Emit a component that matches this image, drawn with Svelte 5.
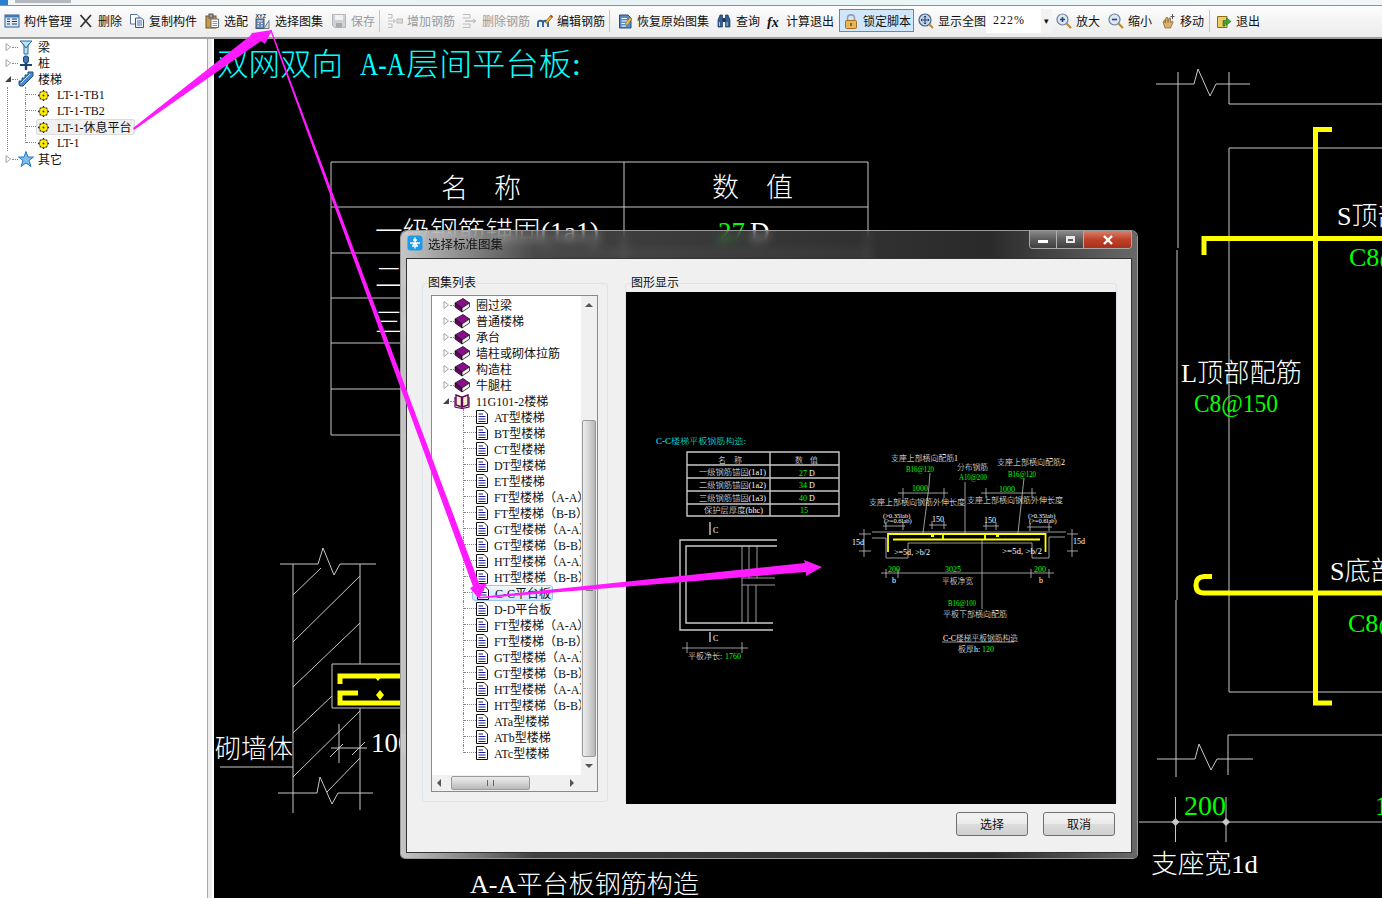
<script>
	const toolbar = [
		{ id: 'mgmt', label: '构件管理', w: 74 },
		{ id: 'cross', label: '删除', w: 51 },
		{ id: 'copy', label: '复制构件', w: 75 },
		{ id: 'clip', label: '选配', w: 51 },
		{ id: 'atlas', label: '选择图集', w: 76 },
		{ id: 'save', label: '保存', w: 48, off: true },
		{ sep: true, w: 8 },
		{ id: 'addbar', label: '增加钢筋', w: 75, off: true },
		{ id: 'delbar', label: '删除钢筋', w: 75, off: true },
		{ id: 'edit', label: '编辑钢筋', w: 72 },
		{ sep: true, w: 8 },
		{ id: 'restore', label: '恢复原始图集', w: 99 },
		{ id: 'find', label: '查询', w: 50 },
		{ id: 'fx', label: '计算退出', w: 77 },
		{ id: 'lock', label: '锁定脚本', w: 75, on: true },
		{ id: 'fit', label: '显示全图', w: 72 },
		{ combo: true, w: 66 },
		{ id: 'zoomin', label: '放大', w: 52 },
		{ id: 'zoomout', label: '缩小', w: 52 },
		{ id: 'hand', label: '移动', w: 50 },
		{ sep: true, w: 6 },
		{ id: 'exit', label: '退出', w: 50 }
	];

	const atlasTop = ['圈过梁', '普通楼梯', '承台', '墙柱或砌体拉筋', '构造柱', '牛腿柱'];
	const atlasKids = [
		'AT型楼梯', 'BT型楼梯', 'CT型楼梯', 'DT型楼梯', 'ET型楼梯',
		'FT型楼梯（A-A）', 'FT型楼梯（B-B）', 'GT型楼梯（A-A）', 'GT型楼梯（B-B）',
		'HT型楼梯（A-A）', 'HT型楼梯（B-B）', 'C-C平台板', 'D-D平台板',
		'FT型楼梯（A-A）', 'FT型楼梯（B-B）', 'GT型楼梯（A-A）', 'GT型楼梯（B-B）',
		'HT型楼梯（A-A）', 'HT型楼梯（B-B）', 'ATa型楼梯', 'ATb型楼梯', 'ATc型楼梯'
	];
	const stairKids = ['LT-1-TB1', 'LT-1-TB2', 'LT-1-休息平台', 'LT-1'];

	const W = '#ffffff';
	const G = '#00ff00';
	const C = '#00ffff';

	// main drawing, page coordinates
	const lines = [
		'M331 162H868V435H331Z', 'M331 207H868', 'M624 162V435', 'M331 253H868', 'M331 298H868', 'M331 343H868', 'M331 389H868',
		'M1156 84H1194L1198 69L1210 96L1216 84H1250', 'M1178 72V248', 'M1177 250V600', 'M1229 72V104H1382', 'M1229 148V692H1382', 'M1229 148H1382',
		'M1157 759H1195L1199 744L1211 770L1217 759H1253', 'M1176 600V777', 'M1228 775V735H1382',
		'M1139 822H1382', 'M1175.5 797V842', 'M1226 797V842',
		'M280 564H318L323 548L334 575L340 564H376', 'M293 564V813', 'M360 564V664', 'M360 708V810',
		'M278 793H317L320 777L332 804L338 793H373', 'M332 664H401', 'M332 664V708H401',
		'M293 595L321 568', 'M293 642L360 576', 'M293 687L360 623', 'M293 733L332 696', 'M293 777L360 711', 'M327 792L360 758',
		'M220 767H293', 'M339 724V763', 'M331 748H367', 'M330 757L343 744', 'M352 755L365 742'
	];
	const texts = [
		{ x: 217, y: 75, s: 31, c: C, t: '双网双向', len: 126 },
		{ x: 360, y: 75, s: 31, c: C, t: 'A-A', len: 45 },
		{ x: 406, y: 75, s: 31, c: C, t: '层间平台板:', len: 175 },
		{ x: 441, y: 198, s: 27, c: W, t: '名' },
		{ x: 494, y: 198, s: 27, c: W, t: '称' },
		{ x: 712, y: 197, s: 27, c: W, t: '数' },
		{ x: 766, y: 197, s: 27, c: W, t: '值' },
		{ x: 375, y: 241, s: 27, c: W, t: '一级钢筋锚固(1a1)', len: 224 },
		{ x: 718, y: 241, s: 27, c: G, t: '27' },
		{ x: 750, y: 241, s: 27, c: W, t: 'D' },
		{ x: 375, y: 287, s: 27, c: W, t: '二级钢筋锚固(1a2)', len: 224 },
		{ x: 375, y: 332, s: 27, c: W, t: '三级钢筋锚固(1a3)', len: 224 },
		{ x: 1337, y: 225, s: 26, c: W, t: 'S顶部配筋' },
		{ x: 1349, y: 266, s: 26, c: G, t: 'C8@150' },
		{ x: 1181, y: 382, s: 26, c: W, t: 'L顶部配筋', len: 121 },
		{ x: 1194, y: 412, s: 26, c: G, t: 'C8@150', len: 84 },
		{ x: 1330, y: 580, s: 26, c: W, t: 'S底部配筋' },
		{ x: 1348, y: 632, s: 26, c: G, t: 'C8@150' },
		{ x: 1184, y: 815, s: 27, c: G, t: '200', len: 42 },
		{ x: 1375, y: 815, s: 27, c: G, t: '100' },
		{ x: 1151, y: 873, s: 26, c: W, t: '支座宽1d', len: 107 },
		{ x: 470, y: 893, s: 25, c: W, t: 'A-A平台板钢筋构造', len: 229 },
		{ x: 215, y: 758, s: 26, c: W, t: '砌墙体', len: 78 },
		{ x: 371, y: 752, s: 27, c: W, t: '100' }
	];

	// small drawing inside the dialog, page coordinates too
	const previewLines = [
		'M687 451H839V515H687Z', 'M687 464H839', 'M687 477H839', 'M687 490H839', 'M687 503H839', 'M770 451V515',
		'M777 539H680V629H773', 'M777 545H686V622H773', 'M710 521V534', 'M710 631V641'
	];
	const previewThin = [
		'M742 545V622', 'M749 545V577', 'M757 545V577', 'M748 584V622', 'M756 584V622', 'M742 577H775', 'M742 584H775',
		'M682 647H748', 'M687 641V652', 'M742 641V652',
		'M930 472L929 485L923 532', 'M965 481V532', 'M1024 477L1018 532',
		'M898 492H948', 'M903 487V497', 'M944 487V497', 'M981 492H1036', 'M986 487V497', 'M1032 487V497',
		'M883 525H905', 'M886 521V529', 'M903 521V529', 'M929 524H947', 'M932 520V528', 'M944 520V528',
		'M983 525H999', 'M986 521V529', 'M996 521V529', 'M1027 526H1052', 'M1030 522V530', 'M1049 522V530',
		'M872 531H1066', 'M872 537H886V557H908V542H1032V557H1049V536H1065',
		'M864 528V556', 'M859 533H871', 'M859 550H871', 'M1072 528V556', 'M1067 533H1078', 'M1067 550H1078',
		'M881 572H1054', 'M886 568V577', 'M898 568V577', 'M1031 568V577', 'M1049 568V577',
		'M982 538V608', 'M942 641H1014'
	];
	const previewTexts = [
		{ x: 656, y: 443, c: C, t: 'C-C楼梯平板钢筋构造:', len: 90 },
		{ x: 718, y: 462, c: W, t: '名' },
		{ x: 734, y: 462, c: W, t: '称' },
		{ x: 795, y: 462, c: W, t: '数' },
		{ x: 810, y: 462, c: W, t: '值' },
		{ x: 699, y: 474, c: W, t: '一级钢筋锚固(1a1)', len: 67 },
		{ x: 699, y: 487, c: W, t: '二级钢筋锚固(1a2)', len: 67 },
		{ x: 699, y: 500, c: W, t: '三级钢筋锚固(1a3)', len: 67 },
		{ x: 704, y: 512, c: W, t: '保护层厚度(bhc)', len: 59 },
		{ x: 799, y: 475, c: G, t: '27' }, { x: 809, y: 475, c: W, t: 'D' },
		{ x: 799, y: 487, c: G, t: '34' }, { x: 809, y: 487, c: W, t: 'D' },
		{ x: 799, y: 500, c: G, t: '40' }, { x: 809, y: 500, c: W, t: 'D' },
		{ x: 800, y: 512, c: G, t: '15' },
		{ x: 713, y: 532, c: W, t: 'C' }, { x: 713, y: 640, c: W, t: 'C' },
		{ x: 688, y: 658, c: W, t: '平板净长:' }, { x: 725, y: 658, c: G, t: '1760' },
		{ x: 891, y: 460, c: W, t: '支座上部横向配筋1', len: 67 },
		{ x: 906, y: 471, c: G, t: 'B16@120', len: 28 },
		{ x: 957, y: 469, c: W, t: '分布钢筋', len: 31 },
		{ x: 959, y: 479, c: G, t: 'A10@200', len: 28 },
		{ x: 997, y: 464, c: W, t: '支座上部横向配筋2', len: 68 },
		{ x: 1008, y: 476, c: G, t: 'B16@120', len: 28 },
		{ x: 912, y: 490, c: G, t: '1000' }, { x: 999, y: 491, c: G, t: '1000' },
		{ x: 869, y: 504, c: W, t: '支座上部横向钢筋外伸长度', len: 96 },
		{ x: 967, y: 502, c: W, t: '支座上部横向钢筋外伸长度', len: 96 },
		{ x: 883, y: 517, c: W, t: '(>0.35lab)', s: 6.5 }, { x: 884, y: 522, c: W, t: '(>=0.6lab)', s: 6.5 },
		{ x: 1028, y: 517, c: W, t: '(>0.35lab)', s: 6.5 }, { x: 1029, y: 522, c: W, t: '(>=0.6lab)', s: 6.5 },
		{ x: 932, y: 521, c: W, t: '150' }, { x: 984, y: 522, c: W, t: '150' },
		{ x: 852, y: 544, c: W, t: '15d' }, { x: 1073, y: 543, c: W, t: '15d' },
		{ x: 894, y: 554, c: W, t: '>=5d, >b/2', len: 36 }, { x: 1002, y: 553, c: W, t: '>=5d, >b/2', len: 40 },
		{ x: 888, y: 571, c: G, t: '200' }, { x: 945, y: 571, c: G, t: '3025' }, { x: 1034, y: 571, c: G, t: '200' },
		{ x: 892, y: 582, c: W, t: 'b' }, { x: 1039, y: 582, c: W, t: 'b' },
		{ x: 942, y: 583, c: W, t: '平板净宽', len: 31 },
		{ x: 948, y: 605, c: G, t: 'B16@100', len: 28 },
		{ x: 943, y: 616, c: W, t: '平板下部横向配筋', len: 64 },
		{ x: 943, y: 640, c: W, t: 'C-C楼梯平板钢筋构造', len: 75 },
		{ x: 958, y: 651, c: W, t: '板厚h:' }, { x: 982, y: 651, c: G, t: '120' }
	];
</script>

{#snippet icon(id)}
	<svg class="ico" viewBox="0 0 16 16">
		{#if id === 'mgmt'}
			<rect x="1" y="2" width="14" height="12" fill="#dfeaf6" stroke="#2d5f96" />
			<rect x="1" y="2" width="14" height="2.5" fill="#3f78b5" />
			<path d="M8 6H13M8 8.5H13M8 11H13M3 6H6M3 8.5H6M3 11H6" stroke="#1f3f66" />
		{:else if id === 'cross'}
			<path d="M2.5 2L13 14M13 2L2.5 14" stroke="#333" stroke-width="1.8" />
		{:else if id === 'copy'}
			<path d="M1.5 1.5H8L10 3.5V11H1.5Z" fill="#fff" stroke="#56729a" />
			<path d="M6.5 5H12.5L14.5 7V14.5H6.5Z" fill="#eef3fb" stroke="#34568a" />
			<path d="M8 8H13M8 10H13M8 12H13" stroke="#4b74ad" />
		{:else if id === 'clip'}
			<rect x="2" y="3" width="10" height="12" fill="#c79b4e" stroke="#6e5220" />
			<rect x="5" y="1" width="4" height="4" fill="#9aa2ad" stroke="#555" />
			<path d="M7 6H14.5V14.5H7Z" fill="#fff" stroke="#5d6d86" />
			<path d="M8.5 8.5H13M8.5 10.5H13M8.5 12.5H13" stroke="#7c93b5" />
		{:else if id === 'atlas'}
			<text x="0.5" y="4.5" font-size="5.4" font-family="Liberation Sans" font-weight="700" fill="#333">XYZ</text>
			<rect x="1" y="6" width="8" height="9.5" fill="#6d89ad" stroke="#3d5370" />
			<path d="M2.5 8H7.5M2.5 10.5H4M6 10.5H7.5M2.5 13H4M6 13H7.5" stroke="#fff" />
			<path d="M9 15.5L14 7.5V15.5Z" fill="#d8dee6" stroke="#71808f" />
		{:else if id === 'save'}
			<path d="M1.5 1.5H14.5V14.5H3.5L1.5 12.5Z" fill="#cfd2d4" stroke="#b4b6b8" />
			<rect x="4" y="2" width="8" height="5" fill="#f2f2f2" />
			<rect x="5" y="10" width="6" height="4.5" fill="#a9acae" />
		{:else if id === 'addbar'}
			<path d="M1 1.5H5V5H1M1 11H5V14.5H1" fill="none" stroke="#bcbcbc" />
			<path d="M1 8H8" stroke="#bcbcbc" />
			<path d="M6 6L8.5 8L6 10" fill="none" stroke="#bcbcbc" />
			<rect x="10" y="6" width="5.5" height="4" fill="#dcdcdc" stroke="#bcbcbc" />
		{:else if id === 'delbar'}
			<path d="M1 1.5H8V5H1M1 11H8V14.5H1" fill="none" stroke="#bcbcbc" />
			<path d="M3 8H13" stroke="#bcbcbc" stroke-width="1.5" />
			<path d="M11 6L14 8L11 10" fill="none" stroke="#bcbcbc" />
		{:else if id === 'edit'}
			<path d="M1 14V10C1 7 6 7 6 10V14M6 14V10C6 7 11 7 11 10V14" fill="none" stroke="#2c5e99" stroke-width="1.8" />
			<path d="M8 9L13.5 2.5L15.5 4L10 10.5Z" fill="#e3b23f" stroke="#7b5414" stroke-width=".6" />
			<path d="M13.5 2.5L15.5 4" stroke="#c4372a" stroke-width="1.6" />
		{:else if id === 'restore'}
			<path d="M2.5 2H11L14 5V15H2.5Z" fill="#5a8cc4" stroke="#234d80" />
			<path d="M4.5 5.5H10M4.5 8H12M4.5 10.5H12M4.5 13H9" stroke="#fff" />
			<path d="M8 11L13 4.5L15 6L10 12.5Z" fill="#e7c049" stroke="#7b5414" stroke-width=".5" />
		{:else if id === 'find'}
			<path d="M2 14V7L4 2H6.5V14ZM9.5 14V2H12L14 7V14Z" fill="#325e93" stroke="#18365c" stroke-width=".7" />
			<rect x="6.5" y="5" width="3" height="4" fill="#18365c" />
			<path d="M3.5 9V13M11 9V13" stroke="#a9c6e6" />
		{:else if id === 'fx'}
			<text x="1" y="13.5" font-size="14" font-style="italic" font-weight="700" font-family="Liberation Serif" fill="#111">fx</text>
		{:else if id === 'lock'}
			<path d="M4.5 8V5C4.5 .8 11.5 .8 11.5 5V8" fill="none" stroke="#9c9ea3" stroke-width="1.6" />
			<rect x="2.5" y="7.5" width="11" height="8" rx="1" fill="#e6b65a" stroke="#a2701f" />
			<path d="M8 10V13" stroke="#6d4a12" stroke-width="1.5" />
		{:else if id === 'fit'}
			<circle cx="7" cy="7" r="6" fill="#c4d5ea" stroke="#48648c" stroke-width="1.2" />
			<path d="M7 3V11M3 7H11M5.8 4.2L7 3L8.2 4.2M5.8 9.8L7 11L8.2 9.8M4.2 5.8L3 7L4.2 8.2M9.8 5.8L11 7L9.8 8.2" fill="none" stroke="#243e6a" />
			<path d="M11 11L15 15" stroke="#c08a2e" stroke-width="2" />
		{:else if id === 'zoomin' || id === 'zoomout'}
			<circle cx="6.5" cy="6.5" r="5.5" fill="#dbe6f3" stroke="#6a7f9d" stroke-width="1.2" />
			<path d={id === 'zoomin' ? 'M4 6.5H9M6.5 4V9' : 'M4 6.5H9'} stroke="#24467a" stroke-width="1.6" />
			<path d="M10.5 10.5L15 15" stroke="#c08a2e" stroke-width="2.2" />
		{:else if id === 'hand'}
			<path d="M3 9L5 6.5V10L6 4.5H7.5L8 9.5L9 5H10.5L10.5 9.5L12.5 8L13 9.5L10.5 15H5Z" fill="#d9b26a" stroke="#80602a" stroke-width=".7" />
			<path d="M12.5 1V6M10.5 3.5H14.5" stroke="#555" />
		{:else if id === 'exit'}
			<path d="M1.5 3.5H11V14.5H1.5Z" fill="#f0cd63" stroke="#8c6c1a" />
			<path d="M7 13V7.5H10.5V5L15 8.5L10.5 12V10H9V13Z" fill="#43a538" stroke="#1f6a1a" stroke-width=".6" />
		{/if}
	</svg>
{/snippet}

{#snippet arrow(open)}
	{#if open}
		<svg class="arrow" viewBox="0 0 8 10"><path d="M7 2V8H1Z" fill="#444" /></svg>
	{:else}
		<svg class="arrow" viewBox="0 0 8 10"><path d="M2 1.5L6.5 5L2 8.5Z" fill="#fff" stroke="#a5a5a5" /></svg>
	{/if}
{/snippet}

{#snippet gear()}
	<svg class="gear" viewBox="0 0 12 12">
		<path d="M6 0V12M0 6H12M2 2L10 10M10 2L2 10" stroke="#222" stroke-width="1.5" />
		<circle cx="6" cy="6" r="4.4" fill="#ffee00" stroke="#333" stroke-width=".7" />
		<circle cx="6" cy="6" r="1.1" fill="#333" />
	</svg>
{/snippet}

{#snippet book()}
	<svg class="book" viewBox="0 0 16 16">
		<path d="M1 6L9 1.5L15.5 6L8 11Z" fill="#8a0f8a" stroke="#111" stroke-width=".8" />
		<path d="M1 6L8 11V15L1 10Z" fill="#5f085f" stroke="#111" stroke-width=".8" />
		<path d="M8 11L15.5 6V10L8 15Z" fill="#f4f0f4" stroke="#111" stroke-width=".8" />
	</svg>
{/snippet}

{#snippet doc()}
	<svg class="doc" viewBox="0 0 12 14">
		<path d="M.5 .5H8L11.5 4V13.5H.5Z" fill="#fff" stroke="#111" />
		<path d="M2.5 4H7M2.5 6.5H9.5M2.5 9H9.5M2.5 11.5H9.5" stroke="#1a1a9c" />
	</svg>
{/snippet}

{#snippet elbow(last)}
	<span class="elbow" class:last><i></i></span>
{/snippet}

<div class="page">
	<div class="titlebar"><span class="app-ico"></span><span class="app-name"></span></div>

	<div class="toolbar">
		{#each toolbar as t}
			{#if t.sep}
				<span class="sep" style:width="{t.w}px"></span>
			{:else if t.combo}
				<span class="combo" style:width="{t.w}px">222%<b>▾</b></span>
			{:else}
				<span class="tool" class:off={t.off} class:on={t.on} style:width="{t.w}px">
					{@render icon(t.id)}{t.label}
				</span>
			{/if}
		{/each}
	</div>

	<div class="work">
		<aside class="side">
			<div class="srow">{@render arrow(false)}<span class="dash"></span>
				<svg class="tico" viewBox="0 0 16 16"><path d="M2 2H14L10 6V15H6V6Z" fill="#bfe0f2" stroke="#1d6ea8" /><path d="M4 4L8 9M12 4L8 9" stroke="#1d6ea8" /></svg>
				<span>梁</span></div>
			<div class="srow">{@render arrow(false)}<span class="dash"></span>
				<svg class="tico" viewBox="0 0 16 16"><rect x="5.5" y="1" width="5" height="7" rx="2" fill="#3979b5" stroke="#1c466f" /><path d="M2 10H14" stroke="#1c466f" stroke-width="2" /><path d="M8 8V15" stroke="#1c466f" stroke-width="2.4" /></svg>
				<span>桩</span></div>
			<div class="srow">{@render arrow(true)}<span class="dash"></span>
				<svg class="tico" viewBox="0 0 16 16"><path d="M1 14V10H4V7H7V4H10V1H15V5L5 15H2Z" fill="#4f88c6" stroke="#1f4c80" /><path d="M3 12L12 3" stroke="#d6e7f7" /></svg>
				<span>楼梯</span></div>
			<div class="skids">
				{#each stairKids as k, i}
					<div class="srow kid">
						{@render elbow(i === stairKids.length - 1)}
						<span class="pick" class:sel={i === 2}>{@render gear()}<span>{k}</span></span>
					</div>
				{/each}
			</div>
			<div class="srow">{@render arrow(false)}<span class="dash"></span>
				<svg class="tico" viewBox="0 0 16 16"><path d="M8 .5L10 6H15.5L11 9.5L13 15.5L8 12L3 15.5L5 9.5L.5 6H6Z" fill="#7dbcec" stroke="#1f78be" /></svg>
				<span>其它</span></div>
		</aside>

		<main class="canvas">
			<svg class="draw" viewBox="214 39 1168 859">
				{#each lines as d}
					<path {d} fill="none" stroke="#c8c8c8" />
				{/each}
				<path d="M1332 129.5H1315.5V703H1332M1204 255V238.5H1382M1212 576.5H1204Q1196 577 1196 585Q1196 593 1204 593H1382" fill="none" stroke="#ffff00" stroke-width="5" />
				<path d="M340 684V676H401M358 693H340V703H401" fill="none" stroke="#ffff00" stroke-width="5" />
				<path d="M374 676H382L378 681ZM380 690L384 695L380 700L376 695Z" fill="#ffff00" />
				<path d="M1175.5 818L1179.5 822L1175.5 826L1171.5 822ZM1226 818L1230 822L1226 826L1222 822Z" fill="#c8c8c8" />
				{#each texts as t}
					<text class="cad" x={t.x} y={t.y} font-size={t.s} fill={t.c} textLength={t.len} lengthAdjust={t.len ? 'spacingAndGlyphs' : undefined}>{t.t}</text>
				{/each}
			</svg>
		</main>
	</div>

	<section class="dialog">
		<header class="dlg-title">
			<svg class="dlg-ico" viewBox="0 0 16 16">
				<rect x=".5" y=".5" width="15" height="15" rx="3" fill="#1e9be8" />
				<path d="M8 2.5V13.5M3 8H13M6 5H10M5 11H6.5V8M11 11H9.5V8" fill="none" stroke="#fff" stroke-width="1.4" />
			</svg>
			<span class="dlg-name">选择标准图集</span>
			<div class="caption">
				<span class="cap-btn"><i class="min"></i></span>
				<span class="cap-btn"><i class="max"></i></span>
				<span class="cap-btn close">
					<svg viewBox="0 0 12 10"><path d="M2 1L10 9M10 1L2 9" stroke="#fff" stroke-width="2.4" /></svg>
				</span>
			</div>
		</header>

		<div class="client">
			<div class="groups">
				<fieldset class="g-list">
					<legend>图集列表</legend>
					<div class="listbox">
						<div class="tree">
							{#each atlasTop as a}
								<div class="trow">{@render arrow(false)}<span class="dash short"></span>{@render book()}<span class="tname">{a}</span></div>
							{/each}
							<div class="trow">{@render arrow(true)}<span class="dash short"></span>
								<svg class="book" viewBox="0 0 16 16">
									<path d="M2 2L7.5 4V14L2 12Z" fill="#f7efc4" stroke="#5f085f" stroke-width="1.4" />
									<path d="M14 2L8.5 4V14L14 12Z" fill="#f7efc4" stroke="#5f085f" stroke-width="1.4" />
									<path d="M1 4V14L8 15.5L15 14V4" fill="none" stroke="#5f085f" stroke-width="1.2" />
								</svg>
								<span class="tname">11G101-2楼梯</span></div>
							<div class="tkids">
								{#each atlasKids as k, i}
									<div class="trow kid">
										{@render elbow(i === atlasKids.length - 1)}
										<span class="leaf" class:cur={i === 11}>{@render doc()}<span>{k}</span></span>
									</div>
								{/each}
							</div>
						</div>
						<div class="vbar">
							<span class="tri up"></span>
							<span class="vthumb"><i></i></span>
							<span class="tri down"></span>
						</div>
						<div class="hbar">
							<span class="tri left"></span>
							<span class="hthumb"><i></i></span>
							<span class="tri right"></span>
						</div>
					</div>
				</fieldset>
				<fieldset class="g-view">
					<legend>图形显示</legend>
					<svg class="preview" viewBox="626 291 490 512">
						{#each previewLines as d}
							<path {d} fill="none" stroke="#c8c8c8" stroke-width="1.4" />
						{/each}
						{#each previewThin as d}
							<path {d} fill="none" stroke="#c0c0c0" stroke-width=".8" />
						{/each}
						<path d="M888 551V533H1045.5V551M893 538.5H1040M943 533V538M985 533V538" fill="none" stroke="#ffff00" stroke-width="1.8" />
						<path d="M931 534H934V536H931ZM996 534H999V536H996Z" fill="#ffff00" />
						{#each previewTexts as t}
							<text class="cad" x={t.x} y={t.y} font-size={t.s ?? 8} fill={t.c} textLength={t.len} lengthAdjust={t.len ? 'spacingAndGlyphs' : undefined}>{t.t}</text>
						{/each}
					</svg>
				</fieldset>
			</div>
			<div class="actions">
				<button>选择</button>
				<button>取消</button>
			</div>
		</div>
	</section>

	<svg class="marks" viewBox="0 0 1382 898">
		<polygon points="133,128 250,36 252,33 272,30 265,44 261,41 134,130" />
		<polygon points="270,30 271.5,30 479.5,584.5 487,583 479,599 470,588 473,586.5" />
		<polygon points="480,597 805,563 804,560 822,567 806,576 806,572 480,598.5" />
	</svg>
</div>

<style>
	:global(body) {
		background: #fff;
	}
	.page {
		position: relative;
		width: 1382px;
		height: 898px;
		overflow: hidden;
		font-family: 'Liberation Serif', 'Noto Sans CJK SC', sans-serif;
		font-size: 12px;
		color: #111;
	}
	.titlebar {
		display: flex;
		gap: 7px;
		height: 6px;
		overflow: hidden;
		background: linear-gradient(90deg, #f4f6f7, #e9f2f4 40%, #eaf6f7 70%, #f1f6f8);
		border-bottom: 1px solid #8b9197;
		box-sizing: border-box;
	}
	.app-ico {
		width: 8px;
		height: 5px;
		background: #2a7fd0;
	}
	.app-name {
		width: 56px;
		height: 3px;
		background: #8a8f96;
		opacity: 0.6;
	}
	.toolbar {
		display: flex;
		align-items: center;
		height: 33px;
		padding-bottom: 2px;
		box-sizing: border-box;
		background: linear-gradient(#fdfdfd, #f2f2f2 60%, #ececec);
		border-bottom: 2px solid #9d9d9d;
	}
	.tool {
		display: flex;
		flex: none;
		align-items: center;
		gap: 4px;
		height: 23px;
		padding-left: 4px;
		box-sizing: border-box;
		white-space: nowrap;
	}
	.tool.off {
		color: #9a9a9a;
	}
	.tool.on {
		background: #cfe6fb;
		outline: 1px solid #3b93e6;
		outline-offset: -1px;
	}
	.ico {
		flex: none;
		width: 16px;
		height: 16px;
	}
	.sep {
		flex: none;
		height: 22px;
		background: linear-gradient(#c4c4c4, #c4c4c4) no-repeat center / 1px 100%;
	}
	.combo {
		display: flex;
		flex: none;
		align-items: center;
		justify-content: space-between;
		height: 24px;
		padding-left: 7px;
		box-sizing: border-box;
		letter-spacing: 1px;
		background: #fff;
	}
	.combo b {
		width: 11px;
		height: 100%;
		font-size: 9px;
		font-weight: 400;
		line-height: 24px;
		text-align: center;
		background: #f3f3f3;
	}
	.work {
		display: flex;
		height: 859px;
	}
	.side {
		flex: none;
		width: 207px;
		background: #fff;
		border-right: 1px solid #a7a7a7;
	}
	.canvas {
		flex: 1;
		background: #000;
		border-left: 2px solid #fff;
		box-shadow: -4px 0 0 #ededed;
		margin-left: 4px;
	}
	.draw {
		display: block;
		width: 1168px;
		height: 859px;
	}
	.cad {
		font-family: 'Liberation Serif', 'Noto Sans CJK SC', serif;
		font-weight: 300;
	}
	.srow {
		display: flex;
		align-items: center;
		height: 16px;
		padding-left: 4px;
	}
	.arrow {
		flex: none;
		width: 8px;
		height: 10px;
	}
	.dash {
		flex: none;
		width: 6px;
		border-top: 1px dotted #888;
	}
	.dash.short {
		width: 4px;
	}
	.tico {
		flex: none;
		width: 16px;
		height: 16px;
		margin-right: 4px;
	}
	.skids {
		margin-left: 7px;
		border-left: 1px dotted #888;
	}
	.srow.kid {
		align-items: flex-start;
		padding-left: 17px;
	}
	.elbow {
		flex: none;
		width: 11px;
		height: 16px;
		box-sizing: border-box;
		border-left: 1px dotted #888;
	}
	.elbow i {
		display: block;
		height: 8px;
		box-sizing: border-box;
		border-bottom: 1px dotted #888;
	}
	.elbow.last {
		height: 8px;
	}
	.pick {
		display: flex;
		align-items: center;
		gap: 8px;
		height: 16px;
		padding: 0 4px 0 2px;
		border-radius: 3px;
	}
	.pick.sel {
		background: #f0f0f0;
		box-shadow: inset 0 0 0 1px #dcdcdc;
	}
	.gear {
		flex: none;
		width: 11px;
		height: 11px;
	}

	.dialog {
		position: absolute;
		left: 401px;
		top: 231px;
		display: flex;
		flex-direction: column;
		width: 736px;
		height: 627px;
		box-sizing: border-box;
		padding: 0 5px 5px;
		border-radius: 6px 6px 4px 4px;
		background: linear-gradient(90deg, rgba(214, 214, 214, 0.92), rgba(120, 120, 120, 0.55) 18%, rgba(70, 70, 70, 0.6) 80%, rgba(140, 140, 140, 0.75));
		backdrop-filter: blur(5px);
		box-shadow: 0 0 0 1px #9a9a9a;
	}
	.dlg-title {
		display: flex;
		align-items: center;
		flex: none;
		height: 27px;
		padding-bottom: 3px;
		box-sizing: border-box;
	}
	.dlg-ico {
		width: 16px;
		height: 16px;
		margin: 0 5px 0 1px;
	}
	.dlg-name {
		font-size: 12.5px;
		color: #151515;
	}
	.caption {
		display: flex;
		align-self: flex-start;
		margin-left: auto;
		height: 18px;
		border: 1px solid #a8a8a8;
		border-top: 0;
		border-radius: 0 0 4px 4px;
		overflow: hidden;
		box-sizing: border-box;
	}
	.cap-btn {
		display: flex;
		align-items: center;
		justify-content: center;
		width: 26px;
		background: linear-gradient(#8a8a8a, #5d5d5d 50%, #404040);
		border-right: 1px solid #b0b0b0;
	}
	.cap-btn.close {
		width: 47px;
		border-right: 0;
		background: linear-gradient(#d5826a, #c1412a 50%, #a8301c);
	}
	.cap-btn svg {
		width: 12px;
		height: 10px;
	}
	.min {
		width: 10px;
		height: 3px;
		margin-top: 4px;
		background: #fff;
	}
	.max {
		width: 9px;
		height: 7px;
		box-sizing: border-box;
		border: 2px solid #e8e8e8;
		border-top-width: 3px;
	}
	.client {
		flex: 1;
		box-sizing: border-box;
		padding: 16px 15px 16px 15px;
		background: #f0f0f0;
		border: 1px solid #333;
	}
	.groups {
		display: flex;
		align-items: flex-start;
		gap: 17px;
		height: 529px;
	}
	fieldset {
		min-width: 0;
		margin: 0;
		box-sizing: border-box;
		border: 1px solid #dce3ec;
		border-radius: 3px;
	}
	legend {
		padding: 0;
		margin-left: 5px;
		font-size: 12px;
		line-height: 17px;
		color: #111;
	}
	.g-list {
		flex: none;
		width: 186px;
		height: 527px;
		padding: 3px 9px 9px 8px;
	}
	.g-list legend {
		margin-left: -3px;
	}
	.g-view {
		flex: none;
		width: 492px;
		height: 529px;
		padding: 0;
	}
	.listbox {
		display: grid;
		grid-template-columns: 149px 16px;
		grid-template-rows: 479px 16px;
		height: 497px;
		box-sizing: border-box;
		border: 1px solid #8a8a8a;
		background: #f3f3f3;
	}
	.tree {
		padding-top: 1px;
		overflow: hidden;
		background: #fff;
	}
	.trow {
		display: flex;
		align-items: center;
		height: 16px;
		padding-left: 10px;
		white-space: nowrap;
	}
	.book {
		flex: none;
		width: 16px;
		height: 16px;
	}
	.tname {
		margin-left: 6px;
	}
	.trow.kid {
		align-items: flex-start;
		padding-left: 31px;
	}
	.trow.kid .elbow {
		width: 13px;
	}
	.leaf {
		display: flex;
		align-items: center;
		gap: 6px;
		height: 16px;
	}
	.leaf.cur {
		width: 81px;
		margin-left: -4px;
		padding-left: 4px;
		box-sizing: border-box;
		border: 1px solid #9ac5ee;
		border-radius: 3px;
		background: linear-gradient(#f2f8fe, #cfe4fa);
	}
	.doc {
		flex: none;
		width: 12px;
		height: 14px;
	}
	.vbar {
		display: flex;
		flex-direction: column;
		align-items: stretch;
		background: #f0f0f0;
	}
	.vthumb {
		display: flex;
		align-items: flex-end;
		justify-content: center;
		height: 337px;
		margin: 113px 1px 0;
		border: 1px solid #9a9a9a;
		border-radius: 2px;
		box-sizing: border-box;
		background: linear-gradient(90deg, #ececec, #d4d4d4 50%, #b6b6b6);
	}
	.vthumb i {
		width: 7px;
		height: 5px;
		margin-bottom: 165px;
		border-top: 1px solid #777;
		border-bottom: 1px solid #777;
		box-sizing: border-box;
	}
	.hbar {
		display: flex;
		align-items: center;
		grid-column: 1 / 3;
		background: #f0f0f0;
	}
	.hthumb {
		display: flex;
		align-items: center;
		justify-content: center;
		flex: none;
		width: 79px;
		height: 14px;
		border: 1px solid #9a9a9a;
		border-radius: 2px;
		box-sizing: border-box;
		background: linear-gradient(#ececec, #cfcfcf 60%, #b9b9b9);
	}
	.hthumb i {
		width: 7px;
		height: 6px;
		border-left: 1px solid #666;
		border-right: 1px solid #666;
		box-sizing: border-box;
	}
	.tri {
		flex: none;
		width: 0;
		height: 0;
	}
	.tri.up {
		align-self: center;
		margin-top: 7px;
		border: 4px solid transparent;
		border-top: 0;
		border-bottom: 4px solid #555;
	}
	.tri.down {
		align-self: center;
		margin-top: 7px;
		border: 4px solid transparent;
		border-bottom: 0;
		border-top: 4px solid #555;
	}
	.tri.left {
		margin: 0 10px 0 5px;
		border: 4px solid transparent;
		border-left: 0;
		border-right: 4px solid #555;
	}
	.tri.right {
		margin-left: 40px;
		border: 4px solid transparent;
		border-right: 0;
		border-left: 4px solid #555;
	}
	.preview {
		display: block;
		width: 490px;
		height: 512px;
		background: #000;
	}
	.actions {
		display: flex;
		justify-content: flex-end;
		gap: 15px;
		margin-top: 8px;
		padding-right: 1px;
	}
	button {
		width: 72px;
		height: 24px;
		padding: 0;
		font: inherit;
		color: #111;
		border: 1px solid #707070;
		border-radius: 3px;
		background: linear-gradient(#f3f3f3, #ebebeb 48%, #dcdcdc 52%, #cfcfcf);
	}
	.marks {
		position: absolute;
		left: 0;
		top: 0;
		width: 1382px;
		height: 898px;
		pointer-events: none;
	}
	.marks polygon {
		fill: #ff1aff;
	}
</style>
